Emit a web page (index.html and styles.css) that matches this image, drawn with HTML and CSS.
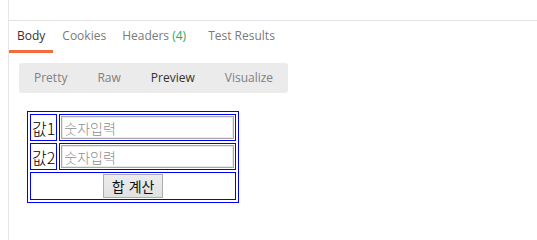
FILE: index.html
```html
<!DOCTYPE html>
<html lang="ko">
<head>
<meta charset="utf-8">
<title>Response</title>
<link rel="stylesheet" href="styles.css">
</head>
<body>
<div class="pane">
  <div class="topbar"></div>
  <div class="tabs">
    <div class="tab active">Body</div>
    <div class="tab">Cookies</div>
    <div class="tab wide">Headers <span class="count">(4)</span></div>
    <div class="tab">Test Results</div>
  </div>
  <div class="content">
    <div class="modes">
      <div class="mode">Pretty</div>
      <div class="mode">Raw</div>
      <div class="mode active">Preview</div>
      <div class="mode">Visualize</div>
    </div>
    <div class="preview">
      <table class="calc">
        <tr>
          <td class="label">값1</td>
          <td><input type="text" placeholder="숫자입력"></td>
        </tr>
        <tr>
          <td class="label">값2</td>
          <td><input type="text" placeholder="숫자입력"></td>
        </tr>
        <tr>
          <td colspan="2" class="action"><button type="button">합 계산</button></td>
        </tr>
      </table>
    </div>
  </div>
</div>
</body>
</html>
```

FILE: styles.css
```css
html, body {
  margin: 0;
  background: #fff;
}
body {
  padding-left: 8px;
  font-family: "Open Sans", sans-serif;
}
.pane {
  border-left: 1px solid #e6e6e6;
  height: 240px;
  box-sizing: border-box;
}
.topbar {
  height: 20px;
  border-bottom: 1px solid #e2e2e2;
}
.tabs {
  display: flex;
  gap: 1px;
  font-size: 12px;
  line-height: 16px;
}
.tab {
  padding: 7px 8px 6px;
  border-bottom: 3px solid transparent;
  color: #7a7a7a;
}
.tab.active {
  color: #333;
  border-bottom-color: #f26b3a;
}
.tab.wide {
  padding-left: 7px;
  padding-right: 13px;
}
.count {
  color: #2aa85c;
}
.content {
  padding: 10px 10px 0;
}
.modes {
  display: flex;
  width: fit-content;
  background: #ebebeb;
  border-radius: 3px;
  font-size: 12px;
  line-height: 30px;
}
.mode {
  padding: 0 15px;
  color: #808080;
}
.mode.active {
  color: #333;
}
.preview {
  padding: 18px 0 0 8px;
}
.calc {
  border: 1px solid #0000ff;
  border-spacing: 2px;
  font-family: "Noto Sans CJK KR", sans-serif;
  font-weight: 300;
  font-size: 16px;
  color: #000;
}
.calc td {
  border: 1px solid #0000ff;
  padding: 1px;
  line-height: 20px;
  vertical-align: middle;
}
.label {
  white-space: nowrap;
}
.calc input {
  display: block;
  width: 173px;
  height: 23px;
  box-sizing: border-box;
  margin: 0;
  padding: 1px 2px;
  border: 1px solid #a9a9a9;
  box-shadow: inset 0 0 0 1px #e9e9e9;
  font: 300 14px "Noto Sans CJK KR", sans-serif;
  color: #000;
  background: #fff;
}
.calc input::placeholder {
  color: #8f8f8f;
}
.action {
  text-align: center;
}
.calc button {
  display: block;
  margin: 0 auto;
  height: 24px;
  padding: 0 8px;
  border: 1px solid #adadad;
  border-radius: 0;
  background: linear-gradient(#ececec, #e1e1e1);
  font: 400 14px "Noto Sans CJK KR", sans-serif;
  color: #111;
}
```
